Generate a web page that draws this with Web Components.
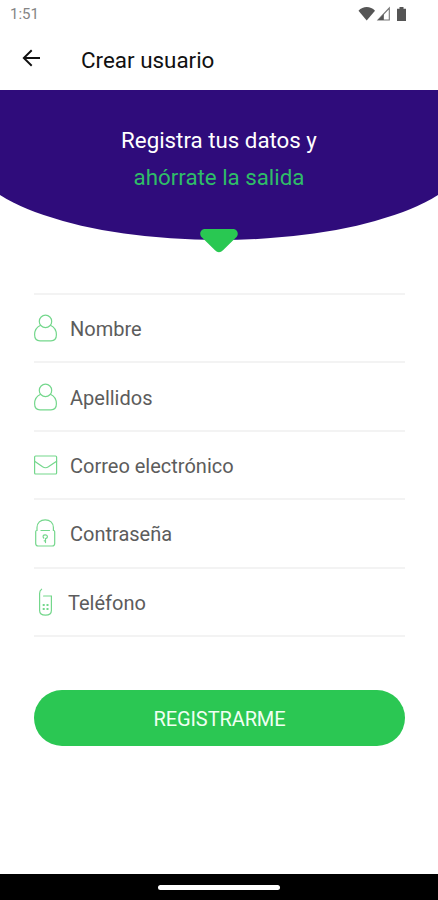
<!DOCTYPE html>
<html lang="es">
<head>
<meta charset="UTF-8">
<meta name="viewport" content="width=device-width, initial-scale=1">
<title>Crear usuario</title>
<style>
  body {
    margin: 0;
    background: #fff;
    font-family: Roboto, "Liberation Sans", sans-serif;
  }
</style>
</head>
<body>

<app-pantalla>
  <barra-estado slot="estado" hora="1:51"></barra-estado>
  <barra-titulo slot="titulo">Crear usuario</barra-titulo>
  <cabecera-registro>
    Registra tus datos y
    <span slot="destacado">ahórrate la salida</span>
  </cabecera-registro>
  <formulario-registro>
    <campo-texto icono="usuario">Nombre</campo-texto>
    <campo-texto icono="usuario">Apellidos</campo-texto>
    <campo-texto icono="correo">Correo electrónico</campo-texto>
    <campo-texto icono="candado">Contraseña</campo-texto>
    <campo-texto icono="telefono">Teléfono</campo-texto>
    <boton-principal slot="accion">REGISTRARME</boton-principal>
  </formulario-registro>
</app-pantalla>

<script>
/* Iconos de los campos, caja de 24x28 */
const ICONOS = {
  usuario: `
    <circle cx="11.5" cy="7.4" r="6.2"/>
    <path d="M6.6 11.2C3 12.8.6 16 .6 20.8c0 4.2 1.6 6 5.4 6h11c3.8 0 5.4-1.8 5.4-6 0-4.8-2.4-8-6-9.6"/>`,
  correo: `
    <rect x=".6" y="5" width="22" height="18" rx="1"/>
    <path d="M.6 10.2l8 5.6c2 1.3 3.8 1.3 5.8 0l8.2-5.6"/>`,
  candado: `
    <path d="M7 11.500h8.500M3 11.500V8.600C3 3.800 6.500.8 11.200.8s8.200 3 8.200 7.800v2.900h.3c.7 0 1 .4 1 1.200v11.800c0 1.700-.8 2.500-2.500 2.500H4.200c-1.700 0-2.500-.8-2.500-2.500V12.700c0-.8.300-1.200 1-1.200z"/>
    <path d="M9.700 19c-1.300-1.600-.5-3.200 1.400-3.200 1.500 0 2.400.8 2.300 2.100-.1.900-.9 1.500-1.900 1.700v4M11.500 21.800h-1.300"/>`,
  telefono: `
    <path d="M7.600 1.200C6.300 2 5.600 3.200 5.600 5.500V22.500c0 3 1.900 4.700 5.900 4.700s5.900-1.700 5.900-4.700V8H9.600"/>
    <path d="M8.700 17h2M12.500 17h2M8.700 21h2M12.500 21h2" stroke-width="2" stroke-linecap="butt"/>`
};

class AppPantalla extends HTMLElement {
  constructor() {
    super();
    this.attachShadow({ mode: 'open' }).innerHTML = `
      <style>
        :host {
          display: flex;
          flex-direction: column;
          height: 900px;
          overflow: hidden;
          background: #fff;
        }
        main { flex: 1; }
        footer {
          display: flex;
          align-items: center;
          justify-content: center;
          height: 26px;
          background: #000;
        }
        .gesto {
          width: 122px;
          height: 5px;
          border-radius: 3px;
          background: #fff;
        }
      </style>
      <slot name="estado"></slot>
      <slot name="titulo"></slot>
      <main><slot></slot></main>
      <footer><div class="gesto"></div></footer>
    `;
  }
}

class BarraEstado extends HTMLElement {
  constructor() {
    super();
    this.attachShadow({ mode: 'open' });
  }

  connectedCallback() {
    this.shadowRoot.innerHTML = `
      <style>
        :host {
          display: flex;
          align-items: center;
          justify-content: space-between;
          height: 28px;
          padding: 0 30px 0 10px;
          color: #858585;
          font-size: 15px;
        }
        svg { display: block; fill: #555; }
      </style>
      <span>${this.getAttribute('hora') || ''}</span>
      <svg width="50" height="16" viewBox="0 0 50 16" aria-hidden="true">
        <path d="M.5 4.700C5-.1 12.500-.1 17 4.700L8.700 14.500z"/>
        <path d="M31.300 2v12H20z" fill="none" stroke="#777" stroke-width="1.100"/>
        <path d="M25.800 8v6H20z"/>
        <path d="M41.500 1h4v1.700H48V15h-9V2.700h2.500z"/>
      </svg>
    `;
  }
}

class BarraTitulo extends HTMLElement {
  constructor() {
    super();
    this.attachShadow({ mode: 'open' }).innerHTML = `
      <style>
        :host {
          display: flex;
          align-items: center;
          gap: 40px;
          height: 62px;
          padding: 0 22px;
          box-sizing: border-box;
          color: #111;
        }
        button {
          padding: 0 0 3px;
          border: 0;
          background: none;
        }
        svg { display: block; }
        h1 {
          margin: 0;
          padding-top: 2px;
          font-size: 22.4px;
          font-weight: 400;
          line-height: 26px;
        }
      </style>
      <button aria-label="Volver">
        <svg width="19" height="18" viewBox="0 0 19 18" fill="none" stroke="#111" stroke-width="1.900">
          <path d="M18 9H2M9.700 1.200L1.800 9l7.900 7.800"/>
        </svg>
      </button>
      <h1><slot></slot></h1>
    `;
  }
}

class CabeceraRegistro extends HTMLElement {
  constructor() {
    super();
    this.attachShadow({ mode: 'open' }).innerHTML = `
      <style>
        :host {
          display: block;
          position: relative;
          height: 164px;
          overflow: hidden;
          font-size: 22.300px;
          line-height: 37px;
          text-align: center;
        }
        /* más ancho que la pantalla para que la curva salga por los lados */
        .fondo {
          box-sizing: border-box;
          width: 496px;
          height: 150px;
          margin-left: -29px;
          padding-top: 32px;
          border-radius: 0 0 50% 50% / 0 0 85px 85px;
          background: #2f0c7b;
          color: #fff;
        }
        .destacado { color: #2fbd68; }
        svg {
          position: absolute;
          top: 139px;
          left: 200px;
        }
      </style>
      <div class="fondo">
        <div><slot></slot></div>
        <div class="destacado"><slot name="destacado"></slot></div>
      </div>
      <svg width="38" height="24" viewBox="0 0 38 24" fill="#29c852" aria-hidden="true">
        <path d="M5 0h28c4.600 0 6.400 5.400 3 8.600L23 21.300c-2.600 2.600-5.400 2.600-8 0L2 8.600C-1.400 5.400.4 0 5 0z"/>
      </svg>
    `;
  }
}

class FormularioRegistro extends HTMLElement {
  constructor() {
    super();
    this.attachShadow({ mode: 'open' }).innerHTML = `
      <style>
        :host { display: block; padding: 39px 33px 0 34px; }
        .campos { border-top: 2px solid #f3f3f3; }
        .accion { padding-top: 53px; }
      </style>
      <div class="campos"><slot></slot></div>
      <div class="accion"><slot name="accion"></slot></div>
    `;
  }
}

class CampoTexto extends HTMLElement {
  constructor() {
    super();
    this.attachShadow({ mode: 'open' });
  }

  connectedCallback() {
    const icono = this.getAttribute('icono');
    this.shadowRoot.innerHTML = `
      <style>
        :host {
          display: flex;
          align-items: center;
          gap: 12px;
          box-sizing: border-box;
          height: 68.4px;
          border-bottom: 2px solid #f3f3f3;
          color: #5c5c5c;
          font-size: 20px;
        }
        :host([icono="telefono"]) { gap: 10px; }
        svg { display: block; flex: none; }
        span { padding-top: 2px; }
      </style>
      <svg width="24" height="28" viewBox="0 0 24 28" fill="none" stroke="#74d78c"
        stroke-width="1.200" stroke-linecap="round" aria-hidden="true">${ICONOS[icono] || ''}</svg>
      <span><slot></slot></span>
    `;
  }
}

class BotonPrincipal extends HTMLElement {
  constructor() {
    super();
    this.attachShadow({ mode: 'open' }).innerHTML = `
      <style>
        :host { display: block; }
        button {
          display: block;
          width: 100%;
          height: 56px;
          padding: 2px 0 0;
          border: 0;
          border-radius: 28px;
          background: #2bc753;
          color: #f0fff2;
          font: inherit;
          font-size: 20px;
          letter-spacing: -0.1px;
        }
      </style>
      <button><slot></slot></button>
    `;
  }
}

customElements.define('app-pantalla', AppPantalla);
customElements.define('barra-estado', BarraEstado);
customElements.define('barra-titulo', BarraTitulo);
customElements.define('cabecera-registro', CabeceraRegistro);
customElements.define('formulario-registro', FormularioRegistro);
customElements.define('campo-texto', CampoTexto);
customElements.define('boton-principal', BotonPrincipal);
</script>
</body>
</html>
